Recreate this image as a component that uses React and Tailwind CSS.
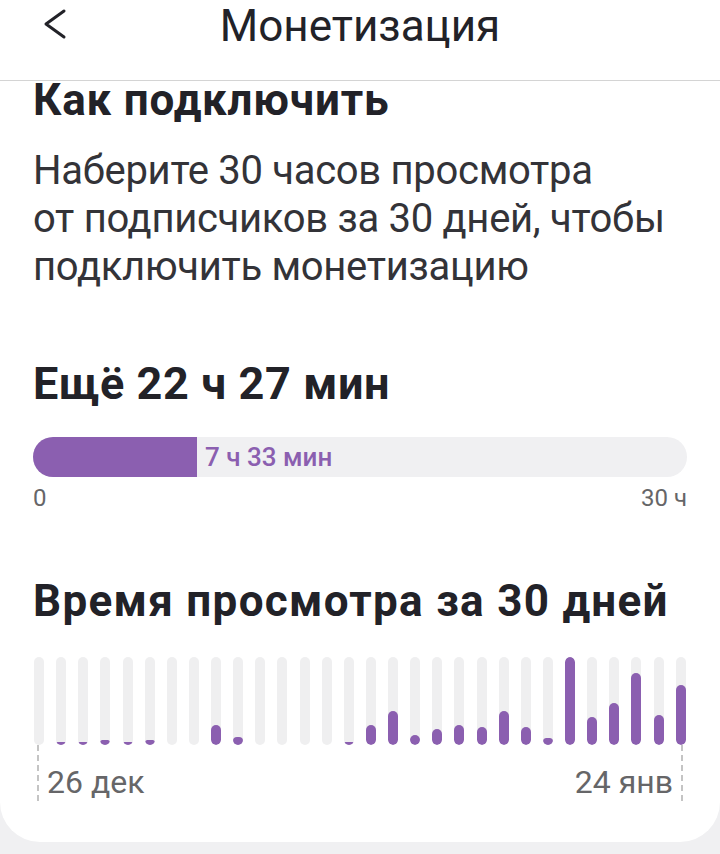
const BARS = [0, 3, 3, 5, 3, 5, 0, 0, 20, 8, 0, 0, 0, 0, 3, 20, 34, 10, 16, 20, 18, 34, 18, 7, 88, 28, 42, 72, 30, 60];

export default function App() {
    return (
        <div className="w-[720px] h-[854px] bg-[#f0f0f2] overflow-hidden font-['Roboto',sans-serif]">
            <div className="bg-white rounded-b-[40px] h-[842px]">
                {/* Header */}
                <div className="relative h-[81px] border-b border-[#d4d4d4] flex justify-center">
                    <button className="absolute left-[42px] top-[8px] text-[#222228]">
                        <svg width="26" height="32" viewBox="0 0 26 32" fill="none" stroke="currentColor" strokeWidth="3" strokeLinecap="round" strokeLinejoin="round">
                            <polyline points="22,3 4,16 22,29" />
                        </svg>
                    </button>
                    <h1 className="pt-[4px] text-[44px] leading-[44px] text-[#222228]">Монетизация</h1>
                </div>

                <div className="px-[33px]">
                    <h2 className="-mt-[5px] text-[44px] leading-[48px] font-bold tracking-[0.8px] text-[#222228] whitespace-nowrap">Как подключить</h2>
                    <p className="mt-[23px] text-[40px] leading-[48px] tracking-[-0.3px] text-[#333338] whitespace-nowrap">
                        Наберите 30 часов просмотра<br />
                        от подписчиков за 30 дней, чтобы<br />
                        подключить монетизацию
                    </p>

                    <h3 className="mt-[67px] text-[45px] leading-[52px] font-bold tracking-[0.6px] text-[#222228]">Ещё 22 ч 27 мин</h3>

                    {/* Progress */}
                    <div className="mt-[27px] h-[40px] rounded-full bg-[#f0f0f2] flex items-center">
                        <div className="h-full w-[164px] bg-[#8b5fb0] rounded-l-full rounded-r-[14px]" />
                        <span className="ml-[8px] text-[26px] font-medium text-[#8b5fb0]">7 ч 33 мин</span>
                    </div>
                    <div className="mt-[7px] flex justify-between text-[24px] leading-[28px] text-[#666668]">
                        <span>0</span>
                        <span>30 ч</span>
                    </div>

                    <h3 className="mt-[63px] text-[44px] leading-[52px] font-bold tracking-[1.3px] text-[#222228] whitespace-nowrap">Время просмотра за 30 дней</h3>

                    {/* Chart */}
                    <div className="mt-[30px] flex justify-between h-[88px] px-px">
                        {BARS.map((v, i) => (
                            <div key={i} className="w-[10px] h-full rounded-full bg-[#efeff0] flex flex-col justify-end overflow-hidden">
                                {v > 0 && <div className="w-full rounded-full bg-[#8b5fb0]" style={{ height: v }} />}
                            </div>
                        ))}
                    </div>
                    <div className="flex justify-between h-[56px] px-[4px]">
                        <div className="flex h-full">
                            <div className="h-full border-l-2 border-dashed border-[#c4c4c4]" />
                            <span className="ml-[8px] mt-[19px] text-[32px] leading-[36px] text-[#666668]">26 дек</span>
                        </div>
                        <div className="flex h-full">
                            <span className="mr-[8px] mt-[19px] text-[32px] leading-[36px] text-[#666668]">24 янв</span>
                            <div className="h-full border-l-2 border-dashed border-[#c4c4c4]" />
                        </div>
                    </div>
                </div>
            </div>
        </div>
    );
}
